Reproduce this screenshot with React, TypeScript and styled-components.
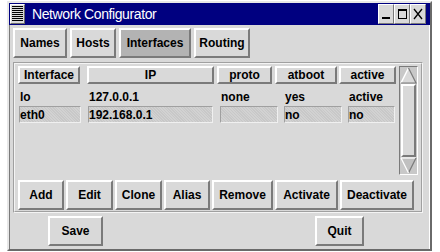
import React from "react";
import styled, { createGlobalStyle, css } from "styled-components";

const Global = createGlobalStyle`
  html, body { margin: 0; padding: 0; background: #ffffff; }
  body { font-family: "Liberation Sans", Arial, sans-serif; }
`;

const raised = css`
  border-style: solid;
  border-width: 2px;
  border-color: #ffffff #7a7a7a #7a7a7a #ffffff;
`;

const Window = styled.div`
  margin: 1px 0 0 7px;
  width: 425px;
  height: 250px;
  box-sizing: border-box;
  background: #d9d9d9;
  border: 2px solid;
  border-color: #e8e8e8 #6a6a6a #6a6a6a #e8e8e8;
  display: flex;
  flex-direction: column;
`;

const TitleBar = styled.div`
  height: 22px;
  background: #000080;
  display: flex;
  align-items: center;
  padding: 0 4px 0 1px;
  flex-shrink: 0;
`;

const MenuIcon = styled.div`
  width: 15px;
  height: 20px;
  background: #d9d9d9;
  border: 1px solid;
  border-color: #ffffff #6a6a6a #6a6a6a #ffffff;
  box-sizing: border-box;
  display: flex;
  align-items: center;
  justify-content: center;
`;

const Title = styled.div`
  color: #ffffff;
  font-size: 14px;
  margin-left: 7px;
  flex: 1;
  letter-spacing: -0.4px;
`;

const TitleButtons = styled.div`
  display: flex;
`;

const TitleBtn = styled.div`
  width: 16px;
  height: 20px;
  box-sizing: border-box;
  background: #d9d9d9;
  border: 1px solid;
  border-color: #ffffff #7a7a7a #7a7a7a #ffffff;
  display: flex;
  align-items: center;
  justify-content: center;
`;

const Body = styled.div`
  flex: 1;
  display: flex;
  flex-direction: column;
  padding: 3px 6px 0 2px;
  border-left: 1px solid #7a7a7a;
  border-right: 1px solid #ffffff;
`;

const Tabs = styled.div`
  display: flex;
  gap: 3px;
  height: 30px;
  padding-left: 1px;
`;

const Tab = styled.div<{ $active?: boolean; $w: number }>`
  box-sizing: border-box;
  width: ${(p) => p.$w}px;
  height: 30px;
  ${raised};
  background: ${(p) => (p.$active ? "#b3b3b3" : "#d9d9d9")};
  font-weight: bold;
  font-size: 12px;
  display: flex;
  align-items: center;
  justify-content: center;
  color: #000;
`;

const Frame = styled.div`
  margin-top: 4px;
  margin-left: 1px;
  height: 151px;
  box-sizing: border-box;
  border: 2px groove #f4f4f4;
  display: flex;
  flex-direction: column;
  padding: 2px 0 1px 2px;
`;

const ListArea = styled.div`
  display: flex;
  height: 109px;
`;

const Table = styled.div`
  display: flex;
  flex-direction: column;
  width: 382px;
`;

const HeaderRow = styled.div`
  display: flex;
  height: 18px;
`;

const HeaderCell = styled.div<{ $w: number; $ml: number }>`
  box-sizing: border-box;
  width: ${(p) => p.$w}px;
  margin-left: ${(p) => p.$ml}px;
  height: 18px;
  ${raised};
  font-size: 12px;
  font-weight: bold;
  display: flex;
  align-items: center;
  justify-content: center;
`;

const Row = styled.div<{ $mt: number }>`
  display: grid;
  grid-template-columns: 69px 132px 64px 64px 47px;
  padding-left: 2px;
  margin-top: ${(p) => p.$mt}px;
  height: 17px;
  align-items: center;
`;

const Cell = styled.div`
  font-size: 12px;
  font-weight: bold;
  padding-left: 1px;
`;

const Field = styled.div<{ $gap: number }>`
  box-sizing: border-box;
  height: 17px;
  width: calc(100% - ${(p) => p.$gap}px);
  background: #c8c8c8;
  background-image: repeating-linear-gradient(45deg, rgba(255,255,255,0.18) 0 1px, transparent 1px 2px);
  border: 1px solid;
  border-color: #a0a0a0 #f0f0f0 #f0f0f0 #a0a0a0;
  font-size: 12px;
  font-weight: bold;
  display: flex;
  align-items: center;
`;

const Scrollbar = styled.div`
  width: 19px;
  box-sizing: border-box;
  border: 1px solid;
  border-color: #7a7a7a #ffffff #ffffff #7a7a7a;
  background: #c8c8c8;
  display: flex;
  flex-direction: column;
`;

const Slider = styled.div`
  flex: 1;
  box-sizing: border-box;
  background: #d9d9d9;
  ${raised};
  margin: 0 1px;
`;

const ButtonRow = styled.div`
  display: flex;
  gap: 2px;
  margin-top: 5px;
  padding-left: 1px;
`;

const Button = styled.div<{ $w: number }>`
  box-sizing: border-box;
  width: ${(p) => p.$w}px;
  height: 30px;
  ${raised};
  font-size: 12px;
  font-weight: bold;
  display: flex;
  align-items: center;
  justify-content: center;
`;

const Footer = styled.div`
  display: flex;
  padding: 3px 0 0 36px;
`;

const FooterButtons = styled.div`
  display: flex;
  width: 316px;
  justify-content: space-between;
`;

const Arrow = ({ up }: { up?: boolean }) => (
  <svg width="17" height="17" viewBox="0 0 17 17">
    {up ? (
      <>
        <polygon points="8.5,1 16,16 1,16" fill="#d9d9d9" />
        <polyline points="1,16 8.5,1" stroke="#ffffff" strokeWidth="1.5" fill="none" />
        <polyline points="8.5,1 16,16 1,16" stroke="#7a7a7a" strokeWidth="1.2" fill="none" />
      </>
    ) : (
      <>
        <polygon points="1,1 16,1 8.5,16" fill="#c0c0c0" />
        <polyline points="1,1 16,1" stroke="#ffffff" strokeWidth="1.2" fill="none" />
        <polyline points="16,1 8.5,16" stroke="#7a7a7a" strokeWidth="1.2" fill="none" />
        <polyline points="1,1 8.5,16" stroke="#ffffff" strokeWidth="1.2" fill="none" />
      </>
    )}
  </svg>
);

const headers = [
  { t: "Interface", w: 62, ml: 1 },
  { t: "IP", w: 127, ml: 7 },
  { t: "proto", w: 55, ml: 3 },
  { t: "atboot", w: 62, ml: 3 },
  { t: "active", w: 57, ml: 2 },
];

const gaps = [7, 7, 6, 6, 0];

export default function App() {
  const lo = ["lo", "127.0.0.1", "none", "yes", "active"];
  const eth = ["eth0", "192.168.0.1", "", "no", "no"];
  return (
    <>
      <Global />
      <Window>
        <TitleBar>
          <MenuIcon>
            <svg width="11" height="16" viewBox="0 0 11 16" shapeRendering="crispEdges">
              {[0, 2, 4, 6, 8, 10, 12, 14].map((y) => (
                <rect key={y} x="0" y={y} width="11" height="1" fill="#000" />
              ))}
            </svg>
          </MenuIcon>
          <Title>Network Configurator</Title>
          <TitleButtons>
            <TitleBtn>
              <svg width="12" height="14" viewBox="0 0 12 14">
                <rect x="2" y="10" width="8" height="2" fill="#000" />
              </svg>
            </TitleBtn>
            <TitleBtn>
              <svg width="12" height="14" viewBox="0 0 12 14">
                <rect x="2.5" y="2.5" width="8" height="9" fill="none" stroke="#000" />
                <rect x="2" y="2" width="9" height="2" fill="#000" />
              </svg>
            </TitleBtn>
            <TitleBtn>
              <svg width="12" height="14" viewBox="0 0 12 14">
                <path d="M2 2 L10 12 M10 2 L2 12" stroke="#000" strokeWidth="1.3" />
              </svg>
            </TitleBtn>
          </TitleButtons>
        </TitleBar>
        <Body>
          <Tabs>
            <Tab $w={54}>Names</Tab>
            <Tab $w={46}>Hosts</Tab>
            <Tab $w={72} $active>Interfaces</Tab>
            <Tab $w={56}>Routing</Tab>
          </Tabs>
          <Frame>
            <ListArea>
              <Table>
                <HeaderRow>
                  {headers.map((h) => (
                    <HeaderCell key={h.t} $w={h.w} $ml={h.ml}>
                      {h.t}
                    </HeaderCell>
                  ))}
                </HeaderRow>
                <Row $mt={4}>
                  {lo.map((v, i) => (
                    <Cell key={i}>{v}</Cell>
                  ))}
                </Row>
                <Row $mt={1}>
                  {eth.map((v, i) => (
                    <Field key={i} $gap={gaps[i]}>
                      {v}
                    </Field>
                  ))}
                </Row>
              </Table>
              <Scrollbar>
                <Arrow up />
                <Slider />
                <Arrow />
              </Scrollbar>
            </ListArea>
            <ButtonRow>
              <Button $w={46}>Add</Button>
              <Button $w={47}>Edit</Button>
              <Button $w={47}>Clone</Button>
              <Button $w={46}>Alias</Button>
              <Button $w={61}>Remove</Button>
              <Button $w={63}>Activate</Button>
              <Button $w={74}>Deactivate</Button>
            </ButtonRow>
          </Frame>
          <Footer>
            <FooterButtons>
              <Button $w={55}>Save</Button>
              <Button $w={49}>Quit</Button>
            </FooterButtons>
          </Footer>
        </Body>
      </Window>
    </>
  );
}
